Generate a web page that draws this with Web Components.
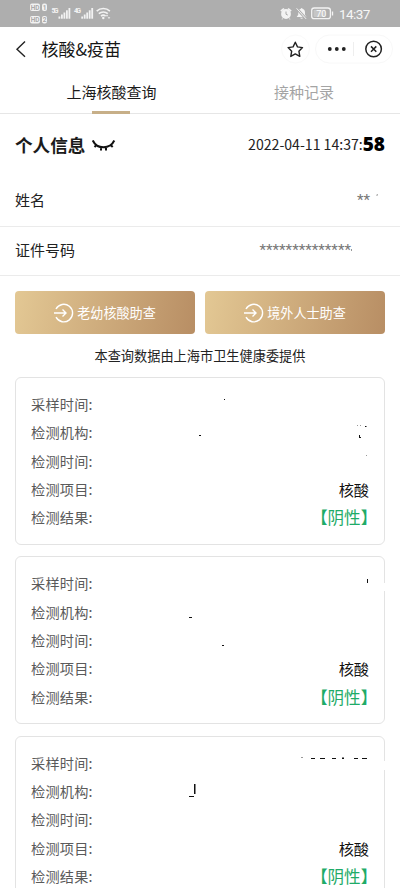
<!DOCTYPE html>
<html lang="zh-CN">
<head>
<meta charset="utf-8">
<title>核酸&amp;疫苗</title>
<style>
html,body{margin:0;background:#fff}
body{width:400px;height:888px;overflow:hidden;font-family:"Noto Sans CJK SC",sans-serif;color:#1b1b1b}
</style>
</head>
<body>
<health-page></health-page>
<script>
const define = (name, html) => customElements.define(name, class extends HTMLElement {
  constructor() {
    super();
    const t = document.createElement('template');
    t.innerHTML = html;
    this.attachShadow({mode: 'open'}).append(t.content.cloneNode(true));
  }
});

define('status-bar', `<style>
:host{display:flex;height:27px;box-sizing:border-box;background:#aeaeae;color:#f6f6f6;justify-content:space-between;padding:0 29px 0 28px}
svg{display:block}
.r{display:flex}
.t{font:13.5px/28px Roboto,sans-serif;width:32px;white-space:nowrap;letter-spacing:-.55px;margin-left:2px}
text{font-family:Roboto,sans-serif}
</style>
<svg width="90" height="27" viewBox="28 0 90 27" fill="#f2f2f2">
 <rect x="30" y="3.5" width="10" height="7.5" rx="2"/><rect x="42" y="3.5" width="5" height="7.5" rx="2"/>
 <rect x="30" y="16" width="10" height="7.5" rx="2"/><rect x="42" y="16" width="5" height="7.5" rx="2"/>
 <g fill="#aaa" font-size="6.5" font-weight="700"><text x="30.7" y="9.6">HD</text><text x="42.8" y="9.6">1</text><text x="30.7" y="22.1">HD</text><text x="42.8" y="22.1">2</text></g>
 <g font-size="7" font-weight="700"><text x="51.5" y="12.8" textLength="7">5G</text><text x="74" y="12.8" textLength="7">4G</text></g>
 <g><rect x="58.5" y="16.5" width="1.8" height="2.2"/><rect x="61" y="14.5" width="1.8" height="4.2"/><rect x="63.5" y="12.5" width="1.8" height="6.2"/><rect x="66" y="10.3" width="1.8" height="8.4"/><rect x="68.5" y="8" width="1.8" height="10.7"/></g>
 <g transform="translate(22.8 0)"><rect x="58.5" y="16.5" width="1.8" height="2.2"/><rect x="61" y="14.5" width="1.8" height="4.2"/><rect x="63.5" y="12.5" width="1.8" height="6.2"/><rect x="66" y="10.3" width="1.8" height="8.4"/><rect x="68.5" y="8" width="1.8" height="10.7"/></g>
 <g fill="none" stroke="#f2f2f2" stroke-width="1.6"><path d="M96.7 11.2a9.6 9.6 0 0 1 13.2 0M98.8 13.7a6.6 6.6 0 0 1 9 0M101 16.2a3.5 3.5 0 0 1 4.6 0"/></g>
 <circle cx="103.3" cy="18" r="1.2"/><path d="M107 14.6l1.3 1.7h-2.6zM109 19l-1.3-1.7h2.6z"/>
</svg>
<div class="r"><svg width="59" height="27" viewBox="279 0 59 27">
 <g fill="#f3f3f3"><circle cx="287" cy="14" r="4.9"/><path d="M281.3 10.6l3-2.7 1.2 1.2-3.1 2.7zM292.7 10.6l-3-2.7-1.2 1.2 3.1 2.7zM283 18l1 1-1.3.8zM291 18l-1 1 1.3.8z"/>
 <path d="M297.7 17l1.5-2.2v-2.5c0-2 1.3-3.2 2.6-3.5.2-1 1.5-1 1.7 0 1.5.4 2.5 1.7 2.5 3.5v2.5l1.5 2.2zM301 17.8h3.3q-1.6 1.7-3.3 0z"/></g>
 <path d="M287 11.5v2.700l1.800.9" fill="none" stroke="#aaa"/><path d="M297.500 8.300l9.800 10.700" stroke="#aeaeae" stroke-width="2.600"/><path d="M297.600 8.300l9.500 10.600" stroke="#f3f3f3"/>
 <rect x="312.700" y="8" width="18.700" height="10.700" rx="2.500" fill="none" stroke="#f3f3f3" stroke-width="1.300"/><rect x="314.500" y="9.800" width="12" height="7.100" rx="1" fill="#c6c6c6"/><path d="M333.500 11.500v4" stroke="#f3f3f3" stroke-width="1.300"/>
 <text x="317.200" y="16.700" font-size="9" fill="#fff" textLength="10">70</text>
</svg><span class="t">14:37</span></div>`);

define('title-bar', `<style>
:host{display:flex;height:44px;align-items:center;padding:0 7px 0 14px}
.n{font-size:17px;line-height:24px;margin:-1px 0 0 11.5px;color:#161616;flex:1}
svg{display:block}
</style>
<svg width="16" height="24" fill="none" stroke="#222" stroke-width="1.4"><path d="M11 4.500L3 12.200l8 7.500"/></svg>
<span class="n">核酸&amp;疫苗</span>
<svg width="114" height="32" viewBox="279 33 114 32" fill="none">
 <rect x="281.5" y="35" width="28" height="28" rx="14" stroke="#fafafa"/><rect x="315.5" y="35" width="77" height="28" rx="14" stroke="#f8f8f8"/>
 <path d="M295.300 42.200l2.200 4.700 5 .7-3.600 3.600.9 5.200-4.500-2.500-4.500 2.500.9-5.200-3.600-3.600 5-.7z" stroke="#222" stroke-width="1.400" stroke-linejoin="round"/>
 <g fill="#222"><circle cx="329.800" cy="49" r="1.900"/><circle cx="336.800" cy="49" r="1.900"/><circle cx="343.800" cy="49" r="1.900"/></g>
 <path d="M353.500 42v14" stroke="#eee"/>
 <circle cx="373.600" cy="49" r="7.800" stroke="#222" stroke-width="1.500"/><path d="M371 46.400l5.300 5.300m0-5.300l-5.300 5.300" stroke="#222" stroke-width="1.500"/>
</svg>`);

define('tab-bar', `<style>
:host{display:grid;grid-template-columns:223px 162px;height:43px;box-sizing:border-box;border-bottom:1px solid #e6e6e6;font-size:15px;line-height:42px;text-align:center}
.a{position:relative}.a::after{content:"";position:absolute;left:92px;bottom:-1px;width:38px;height:3px;background:#c7af88}
.b{color:#a4a4a4}
</style><span class="a">上海核酸查询</span><span class="b">接种记录</span>`);

define('info-head', `<style>
:host{display:flex;height:62px;padding:0 15px 2px;align-items:center;box-sizing:border-box}
b{font-size:17.6px;font-weight:700}
svg{margin-left:7px;flex:1}
.d{font:14.1px/26px "Noto Sans CJK SC",sans-serif;color:#222;white-space:nowrap}
.s{font:800 19px/24px "Open Sans",sans-serif;color:#000}
</style><b>个人信息</b>
<svg height="16" fill="none" stroke="#111" stroke-width="2"><path d="M.8 4.500C5 13.500 18 13.500 22.300 4.500M5 8.500l-2.500 2.500M9 11v3.600M14 11v3.600M18.200 8.500l2.500 2.500"/></svg>
<span class="d">2022-04-11 14:37:</span><span class="s">58</span>`);

define('info-row', `<style>
:host{display:flex;justify-content:space-between;box-sizing:border-box;border-bottom:1px solid #ebebeb;padding:0 15px 3px;font-size:15px;align-items:center;color:#222}
.v{display:block;color:#777;font:15.2px/20px Roboto,sans-serif}
</style><slot></slot><span class="v"><slot name="v"></slot></span>`);

define('help-button', `<style>
:host{display:flex;flex:1;height:43px;border-radius:4px;background:linear-gradient(100deg,#e3c894,#b88e64);color:#fff;font-size:13.1px;align-items:center;justify-content:center;gap:3px}
svg{display:block}
span{margin-top:-1px}
</style><svg width="20" height="20" fill="none" stroke="#fff" stroke-width="1.4"><path d="M2 6a8.800 8.800 0 1 1 0 8.200M0 10h12M8.500 6.500l3.500 3.500-3.500 3.500"/></svg><span><slot></slot></span>`);

define('result-card', `<style>
:host{display:block;box-sizing:border-box;height:168px;border:1px solid #e3e3e3;border-radius:6px;padding:12px 15px;font-size:14.2px;color:#5a5a5a}
div{display:flex;justify-content:space-between;height:28.35px;line-height:28.35px}
span{letter-spacing:.2px}
b{font-weight:400;font-size:15.2px;color:#111}
.g{font-size:16.6px;color:#1fab68;font-feature-settings:"halt"}
</style>
<div><span>采样时间:</span></div><div><span>检测机构:</span></div><div><span>检测时间:</span></div>
<div><span>检测项目:</span><b>核酸</b></div><div><span>检测结果:</span><b class="g">【阴性】</b></div>`);

define('health-page', `<style>
:host{display:block;position:relative;height:888px;overflow:hidden}
.btns{display:flex;gap:10px;padding:15px 15px 0}
p{margin:11px 0 10px;text-align:center;font-size:13.2px;line-height:22px;color:#222}
.cards{display:grid;gap:11.3px;padding:0 15px}
.marks{position:absolute;left:0;top:0;pointer-events:none}
</style>
<status-bar></status-bar><title-bar></title-bar><tab-bar></tab-bar><info-head></info-head>
<info-row style="height:51px">姓名<span slot="v" style="margin-right:15px">**</span></info-row>
<info-row style="height:49px">证件号码<span slot="v" style="margin-right:34px">**************</span></info-row>
<div class="btns"><help-button>老幼核酸助查</help-button><help-button>境外人士助查</help-button></div>
<p>本查询数据由上海市卫生健康委提供</p>
<div class="cards"><result-card></result-card><result-card></result-card><result-card></result-card></div>
<svg class="marks" width="400" height="888">
 <path fill="#fff" d="M380 583h10v8h-10zM380 761h10v9h-10z"/>
 <g fill="#111"><path d="M224 399h1v1h-1zM199 435h2v1h-2zM365 426h1.500v1h-1.500zM359 435h1v2h1v1h-2zM367 579h1v4h-1zM189 617h3v1h-3zM222 645h2v1h-2zM194 784h1.500v10h-1.500zM189 796h5v1h-5z"/>
 <path d="M311 758h4v1h-4zM320 758h5v1h-5zM332 758h4v1h-4zM342 757.500h2v1.500h-2zM354 758h4v1h-4zM362 758h5v1h-5z"/></g>
 <path fill="#999" d="M357 425h1v1h-1zM360 425h1v1h-1zM366 455h1v1h-1zM376 195l2-1v1l-1 1zM351 249h1v2h-1zM301 757h2v1h-2z"/>
</svg>`);
</script>
</body>
</html>
